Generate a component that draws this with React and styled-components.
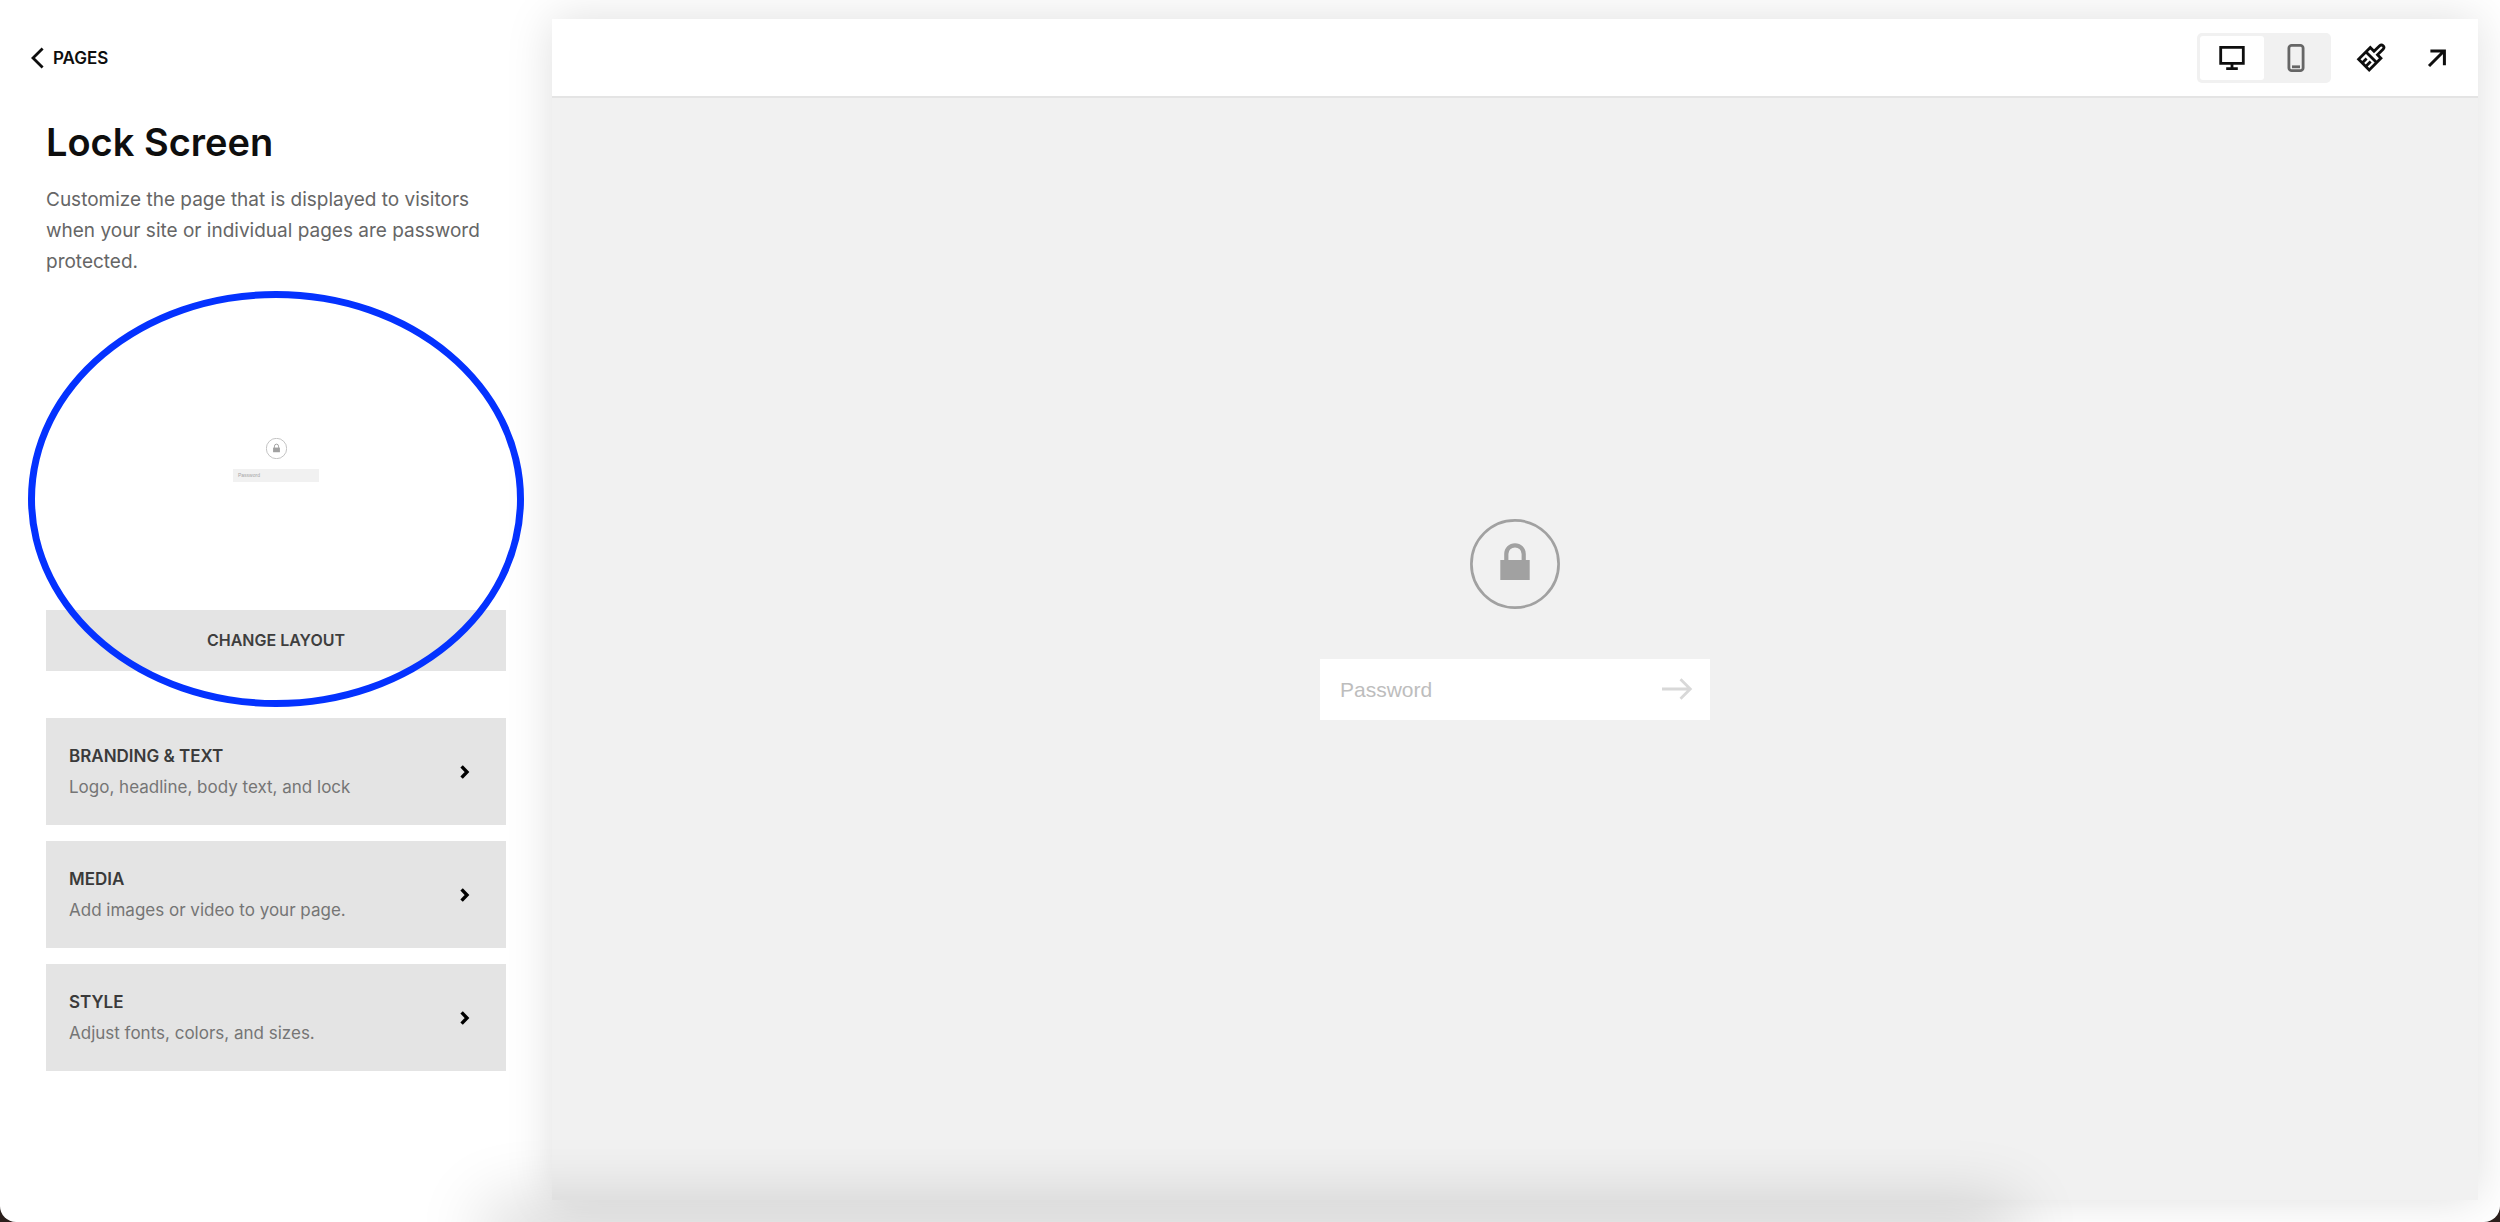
import React, { useState } from 'react';
import styled, { createGlobalStyle } from 'styled-components';

const GlobalStyle = createGlobalStyle`
    * {
        box-sizing: border-box;
    }

    body {
        margin: 0;
        background: #2b1f1c;
        font-family: Inter, 'Liberation Sans', sans-serif;
    }

    button {
        border: none;
        padding: 0;
        background: none;
        font-family: inherit;
        cursor: pointer;
    }

    svg {
        display: block;
    }
`

const Page = styled.div`
    position: relative;
    display: flex;
    min-height: 100vh;
    padding: 19px 22px 22px 0;
    background: #fff;
    border-radius: 0 0 16px 16px;
    overflow: hidden;
`

const Sidebar = styled.aside`
    flex: 0 0 552px;
    padding: 23px 46px;
`

const BackLink = styled.a`
    display: inline-flex;
    align-items: center;
    gap: 9px;
    margin-left: -16px;
    color: #0e0e0e;
    font-size: 17px;
    font-weight: 600;
    line-height: 32px;
    text-decoration: none;
`

const Title = styled.h1`
    margin: 45px 0 0;
    color: #0e0e0e;
    font-size: 38px;
    font-weight: 600;
    line-height: 46px;
`

const Description = styled.p`
    margin: 19px 0 0;
    color: #666;
    font-size: 19px;
    line-height: 31px;
`

const LayoutPicker = styled.section`
    position: relative;
    margin-top: 32px;
`

const Highlight = styled.div`
    position: absolute;
    top: -18px;
    left: -18px;
    right: -18px;
    bottom: -36px;
    border: 7px solid #0432ff;
    border-radius: 50%;
    pointer-events: none;
`

const Thumbnail = styled.div`
    display: flex;
    flex-direction: column;
    align-items: center;
    justify-content: center;
    gap: 10px;
    height: 301px;
`

const ThumbnailField = styled.div`
    width: 86px;
    padding: 0 5px;
    background: #f1f1f1;
    color: #a5a5a5;
    font-family: 'Liberation Sans', sans-serif;
    font-size: 5px;
    line-height: 13px;
`

const ChangeLayout = styled.button`
    display: block;
    width: 100%;
    background: #e4e4e4;
    color: #3e3e3e;
    font-size: 16px;
    font-weight: 600;
    line-height: 61px;
`

const Options = styled.nav`
    display: flex;
    flex-direction: column;
    gap: 16px;
    margin-top: 47px;
`

const Option = styled.button`
    display: flex;
    align-items: center;
    justify-content: space-between;
    padding: 23px 36px 23px 23px;
    background: #e4e4e4;
    text-align: left;
`

const OptionText = styled.span`
    display: block;
    color: ${props => (props.$heading ? '#3a3a3a' : '#757575')};
    font-size: 17px;
    font-weight: ${props => (props.$heading ? 600 : 400)};
    line-height: ${props => (props.$heading ? 31 : 30)}px;
`

const Preview = styled.main`
    flex: 1;
    display: flex;
    flex-direction: column;
    background: #f1f1f1;
    box-shadow: 0 0 44px rgba(0, 0, 0, 0.13);
`

const Toolbar = styled.header`
    display: flex;
    align-items: center;
    justify-content: flex-end;
    height: 79px;
    padding-right: 14px;
    background: #fff;
    border-bottom: 2px solid #e4e4e4;
`

const DeviceToggle = styled.div`
    display: flex;
    margin-right: 13px;
    padding: 3px;
    background: #f1f1f1;
    border-radius: 5px;
`

const DeviceButton = styled.button`
    display: grid;
    place-items: center;
    width: 64px;
    height: 44px;
    border-radius: 3px;
    background: ${props => (props.$active ? '#fff' : 'transparent')};
`

const ToolButton = styled.button`
    display: grid;
    place-items: center;
    width: 54px;
    height: 44px;
    margin-left: ${props => (props.$spaced ? 12 : 0)}px;
`

const Canvas = styled.div`
    flex: 1;
    display: flex;
    flex-direction: column;
    align-items: center;
    justify-content: center;
    gap: 50px;
    padding-bottom: 59px;
`

const PasswordForm = styled.form`
    display: flex;
    align-items: center;
    width: 390px;
    height: 61px;
    padding: 0 15px 0 20px;
    background: #fff;
`

const PasswordInput = styled.input`
    flex: 1;
    min-width: 0;
    padding: 0;
    border: none;
    outline: none;
    background: none;
    color: #555;
    font-family: 'Liberation Sans', sans-serif;
    font-size: 21px;

    &::placeholder {
        color: #bdbdbd;
        opacity: 1;
    }
`

// soft shadow that rises from below the bottom edge
const BottomShadow = styled.div`
    position: absolute;
    left: 20%;
    right: 20%;
    bottom: -20px;
    height: 20px;
    box-shadow: 0 0 70px 14px rgba(0, 0, 0, 0.2);
    pointer-events: none;
`

const LockIcon = ({ size }) => (
    <svg width={size} height={size} viewBox="0 0 90 90" fill="none" stroke="#a1a1a1" aria-hidden="true">
        <circle cx="45" cy="45" r="43.6" strokeWidth="2.7" />
        <path d="M36.3 42V35a8.7 8.7 0 0 1 17.4 0V42" strokeWidth="4.2" />
        <path d="M30.3 41h29.4v20h-29.4z" fill="#a1a1a1" stroke="none" />
    </svg>
)

const options = [
    { title: 'BRANDING & TEXT', text: 'Logo, headline, body text, and lock' },
    { title: 'MEDIA', text: 'Add images or video to your page.' },
    { title: 'STYLE', text: 'Adjust fonts, colors, and sizes.' },
]

const App = () => {
    const [device, setDevice] = useState('desktop');

    return (
        <Page>
            <GlobalStyle />
            <Sidebar>
                <BackLink href="#pages">
                    <svg width="14" height="22" viewBox="0 0 14 22" fill="none" stroke="#0e0e0e" strokeWidth="2.8">
                        <path d="M12.6 1.5L3 11l9.6 9.5" />
                    </svg>
                    PAGES
                </BackLink>
                <Title>Lock Screen</Title>
                <Description>
                    Customize the page that is displayed to visitors when your site or individual pages are password protected.
                </Description>
                <LayoutPicker>
                    <Thumbnail>
                        <LockIcon size={21} />
                        <ThumbnailField>Password</ThumbnailField>
                    </Thumbnail>
                    <ChangeLayout type="button">CHANGE LAYOUT</ChangeLayout>
                    <Highlight />
                </LayoutPicker>
                <Options>
                    {options.map(option => (
                        <Option type="button" key={option.title}>
                            <span>
                                <OptionText $heading>{option.title}</OptionText>
                                <OptionText>{option.text}</OptionText>
                            </span>
                            <svg width="10" height="14" viewBox="0 0 10 14" fill="none" stroke="#000" strokeWidth="3.4">
                                <path d="M1.6 1.4L7 7l-5.4 5.6" />
                            </svg>
                        </Option>
                    ))}
                </Options>
            </Sidebar>
            <Preview>
                <Toolbar>
                    <DeviceToggle>
                        <DeviceButton
                            type="button"
                            aria-label="Desktop"
                            $active={device === 'desktop'}
                            onClick={() => setDevice('desktop')}
                        >
                            <svg width="26" height="26" viewBox="0 0 26 26" fill="none" stroke="#0e0e0e" strokeWidth="2.8">
                                <path d="M1.7 2.3h22.6v16H1.7zM13 18.3v5M7.2 23.6h11.6" />
                            </svg>
                        </DeviceButton>
                        <DeviceButton
                            type="button"
                            aria-label="Mobile"
                            $active={device === 'mobile'}
                            onClick={() => setDevice('mobile')}
                        >
                            <svg width="18" height="30" viewBox="0 0 18 30" fill="none" stroke="#666" strokeWidth="2.8">
                                <rect x="1.9" y="2.3" width="14.2" height="25.4" rx="2.8" />
                                <path d="M5 23.8h8" />
                            </svg>
                        </DeviceButton>
                    </DeviceToggle>
                    <ToolButton type="button" aria-label="Site styles">
                        <svg width="30" height="30" viewBox="0 0 30 30" fill="none" stroke="#0e0e0e" strokeWidth="2.8">
                            <path d="M14.3 4.6L2.6 16.3l10.6 10.6L24.9 15.2l-3.4-3.4 5.6-5.6a2.4 2.4 0 0 0-3.4-3.4L18 8.3z" />
                            <path d="M10 9l10.6 10.6M6.2 19.9l4.4-4.4M9.7 23.4l5-5" />
                        </svg>
                    </ToolButton>
                    <ToolButton type="button" aria-label="Open in new window" $spaced>
                        <svg width="20" height="20" viewBox="0 0 20 20" fill="none" stroke="#0e0e0e" strokeWidth="3">
                            <path d="M2 18L17 3M3.4 3h14v14.2" />
                        </svg>
                    </ToolButton>
                </Toolbar>
                <Canvas>
                    <LockIcon size={90} />
                    <PasswordForm onSubmit={e => e.preventDefault()}>
                        <PasswordInput type="password" placeholder="Password" aria-label="Password" />
                        <button type="submit" aria-label="Submit">
                            <svg width="34" height="24" viewBox="0 0 34 24" fill="none" stroke="#d8d8d8" strokeWidth="2.8">
                                <path d="M1 11h28M19.5 1.2L29.3 11l-9.8 9.8" />
                            </svg>
                        </button>
                    </PasswordForm>
                </Canvas>
            </Preview>
            <BottomShadow />
        </Page>
    )
}

export default App
